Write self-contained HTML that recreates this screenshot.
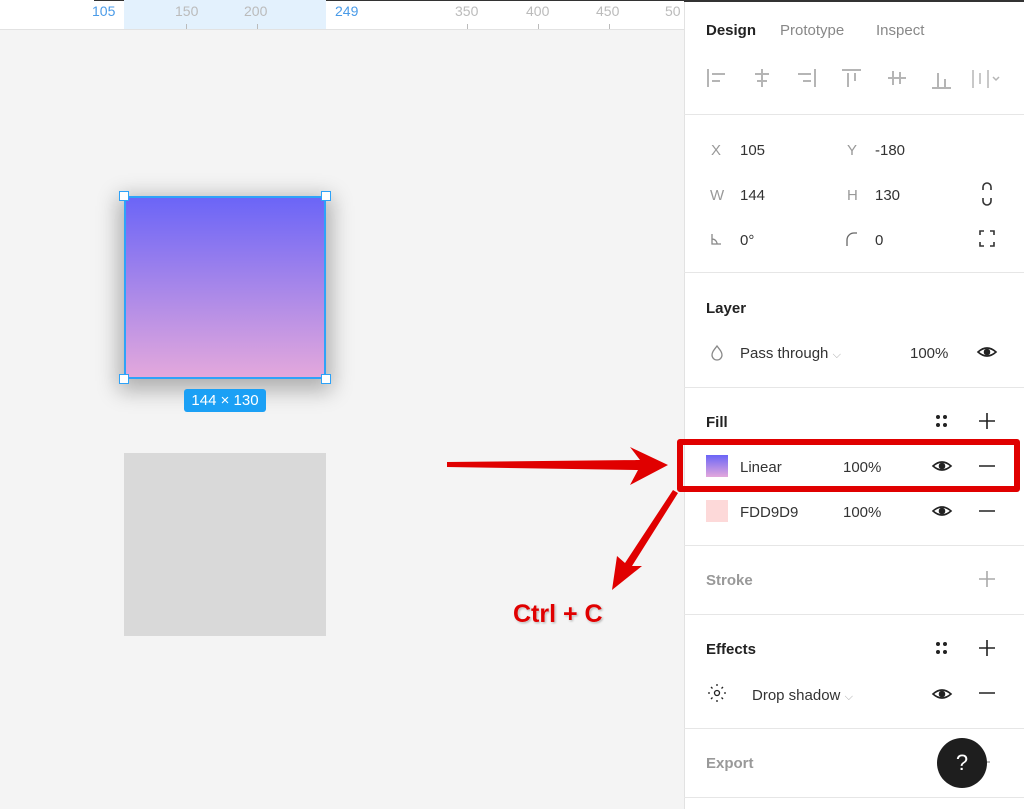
<!DOCTYPE html>
<html><head><meta charset="utf-8"><style>
*{margin:0;padding:0;box-sizing:border-box}
body{width:1024px;height:809px;overflow:hidden;background:#f4f4f4;font-family:"Liberation Sans",sans-serif;position:relative;color:#222}
.a{position:absolute}
.rl{font-size:14px;color:#bbb;top:3px}
.tk{position:absolute;top:24px;width:1px;height:5px;background:#bbb}
.t{position:absolute;font-size:15px;color:#333;margin-top:2px}
.g{color:#999}
.h{position:absolute;font-size:15px;font-weight:bold;color:#222;margin-top:2px}
.sep{position:absolute;left:684px;width:340px;height:1px;background:#e6e6e6}
svg{position:absolute;overflow:visible}
</style></head><body>
<div class="a" style="left:0;top:0;width:684px;height:30px;background:#fff;border-bottom:1px solid #e2e2e2"></div>
<div class="a" style="left:94px;top:0;width:590px;height:1px;background:#333"></div>
<div class="a" style="left:124px;top:0;width:202px;height:29px;background:#e3f1fd"></div>
<div class="a rl" style="left:92px;color:#4a9be8">105</div>
<div class="a rl" style="left:175px">150</div>
<div class="a rl" style="left:244px">200</div>
<div class="a rl" style="left:335px;color:#4a9be8">249</div>
<div class="a rl" style="left:455px">350</div>
<div class="a rl" style="left:526px">400</div>
<div class="a rl" style="left:596px">450</div>
<div class="a rl" style="left:665px">50</div>
<div class="tk" style="left:186px"></div><div class="tk" style="left:257px"></div><div class="tk" style="left:467px"></div><div class="tk" style="left:538px"></div><div class="tk" style="left:609px"></div>
<div class="a" style="left:124px;top:196px;width:202px;height:183px;background:linear-gradient(#6b65f7,#e3a8dc);box-shadow:0 6px 20px 6px rgba(0,0,0,.28);border:2px solid #2ea2f8"></div>
<div class="a" style="left:119px;top:191px;width:10px;height:10px;background:#fff;border:1.5px solid #2ea2f8"></div>
<div class="a" style="left:321px;top:191px;width:10px;height:10px;background:#fff;border:1.5px solid #2ea2f8"></div>
<div class="a" style="left:119px;top:374px;width:10px;height:10px;background:#fff;border:1.5px solid #2ea2f8"></div>
<div class="a" style="left:321px;top:374px;width:10px;height:10px;background:#fff;border:1.5px solid #2ea2f8"></div>
<div class="a" style="left:184px;top:389px;width:82px;height:23px;background:#1ba0f5;border-radius:3px;color:#fff;font-size:15px;text-align:center;line-height:23px">144 × 130</div>
<div class="a" style="left:124px;top:453px;width:202px;height:183px;background:#d9d9d9"></div>
<div class="a" style="left:684px;top:0;width:340px;height:809px;background:#fff;border-left:1px solid #e2e2e2"></div>
<div class="a" style="left:684px;top:0;width:340px;height:2px;background:#333"></div>
<div class="t" style="left:706px;top:20px;font-weight:bold;color:#222">Design</div>
<div class="t g" style="left:780px;top:20px;color:#888">Prototype</div>
<div class="t g" style="left:876px;top:20px;color:#888">Inspect</div>
<svg style="left:0;top:0" width="1024" height="809" stroke="#b5b5b5" stroke-width="2" fill="none">
<path d="M708 69v18M712 74h13M712 81h8"/><path d="M762 69v18M755 74h14M757 81h10"/>
<path d="M815 69v18M798 74h13M803 81h8"/><path d="M842 70h19M848 73v14M855 73v8"/>
<path d="M888 78h18M893 71v14M900 72v12"/><path d="M932 88h19M938 73v14M945 79v8"/>
<path d="M973 70v18M980 73v11M988 70v18M993 77l3 3 3-3" stroke-width="1.5"/>
</svg>
<div class="sep" style="top:114px"></div>
<div class="t g" style="left:711px;top:140px">X</div><div class="t" style="left:740px;top:140px">105</div>
<div class="t g" style="left:847px;top:140px">Y</div><div class="t" style="left:875px;top:140px">-180</div>
<div class="t g" style="left:710px;top:185px">W</div><div class="t" style="left:740px;top:185px">144</div>
<div class="t g" style="left:847px;top:185px">H</div><div class="t" style="left:875px;top:185px">130</div>
<div class="t" style="left:740px;top:230px">0°</div><div class="t" style="left:875px;top:230px">0</div>
<svg style="left:0;top:0" width="1024" height="809" stroke="#333" stroke-width="1.6" fill="none">
<path d="M983 190v-3a4 4 0 0 1 8 0v3M983 198v3a4 4 0 0 0 8 0v-3"/>
<path d="M980 235v-4h4M990 231h4v4M994 242v4h-4M984 246h-4v-4"/>
<path d="M712 234v10h9M712 239a5 5 0 0 1 5 5" stroke="#888" stroke-width="1.3"/>
<path d="M847 246v-6a7 7 0 0 1 7-7h3" stroke="#666" stroke-width="1.3"/>
</svg>
<div class="sep" style="top:272px"></div>
<div class="h" style="left:706px;top:298px">Layer</div>
<div class="t" style="left:740px;top:343px">Pass through <span style="color:#aaa;font-size:11px">⌵</span></div>
<div class="t" style="left:910px;top:343px">100%</div>
<div class="sep" style="top:387px"></div>
<div class="h" style="left:706px;top:412px">Fill</div>
<div class="t" style="left:740px;top:457px">Linear</div><div class="t" style="left:843px;top:457px">100%</div>
<div class="a" style="left:706px;top:455px;width:22px;height:22px;background:linear-gradient(#6b65f7,#e3a8dc)"></div>
<div class="t" style="left:740px;top:502px">FDD9D9</div><div class="t" style="left:843px;top:502px">100%</div>
<div class="a" style="left:706px;top:500px;width:22px;height:22px;background:#fdd9d9"></div>
<div class="sep" style="top:545px"></div>
<div class="h" style="left:706px;top:570px;color:#999">Stroke</div>
<div class="sep" style="top:614px"></div>
<div class="h" style="left:706px;top:639px">Effects</div>
<div class="t" style="left:752px;top:685px">Drop shadow <span style="color:#aaa;font-size:11px">⌵</span></div>
<div class="sep" style="top:728px"></div>
<div class="h" style="left:706px;top:753px;color:#999">Export</div>
<div class="sep" style="top:797px"></div>
<svg style="left:0;top:0" width="1024" height="809" stroke="#222" stroke-width="1.6" fill="none">
<path d="M717 346c-3 4-5 6-5 9a5 5 0 0 0 10 0c0-3-2-5-5-9z" stroke="#888" stroke-width="1.3"/>
<path d="M978 352q9-8 18 0q-9 8-18 0z"/><circle cx="987" cy="352" r="2.5" fill="#222"/>
<path d="M933 466q9-8 18 0q-9 8-18 0z"/><circle cx="942" cy="466" r="2.5" fill="#222"/>
<path d="M933 511q9-8 18 0q-9 8-18 0z"/><circle cx="942" cy="511" r="2.5" fill="#222"/>
<path d="M933 694q9-8 18 0q-9 8-18 0z"/><circle cx="942" cy="694" r="2.5" fill="#222"/>
<path d="M979 466h16M979 511h16M979 693h16"/>
<path d="M987 413v16M979 421h16M987 640v16M979 648h16"/>
<path d="M987 571v16M979 579h16" stroke="#aaa"/>
<g fill="#222" stroke="none"><circle cx="938" cy="417" r="2"/><circle cx="945" cy="417" r="2"/><circle cx="938" cy="425" r="2"/><circle cx="945" cy="425" r="2"/>
<circle cx="938" cy="644" r="2"/><circle cx="945" cy="644" r="2"/><circle cx="938" cy="652" r="2"/><circle cx="945" cy="652" r="2"/></g>
<circle cx="717" cy="693" r="2.5" stroke-width="1.3"/>
<path d="M717 684v2M717 700v2M708 693h2M724 693h2M711 687l1.5 1.5M723 687l-1.5 1.5M711 699l1.5-1.5M723 699l-1.5-1.5" stroke-width="1.3"/>
<path d="M980 762h10" stroke="#aaa"/>
</svg>
<div class="a" style="left:937px;top:738px;width:50px;height:50px;border-radius:50%;background:#1e1e1e;color:#fff;font-size:22px;text-align:center;line-height:50px">?</div>
<div class="a" style="left:677px;top:439px;width:343px;height:53px;border:6px solid #e00000;border-radius:3px"></div>
<svg style="left:0;top:0" width="1024" height="809">
<path d="M447 462L640 460L630 447L668 465L630 485L638 470L447 467Z" fill="#e00000"/>
<path d="M678 493L632 566L642 566L612 590L617 556L625 563L673 490Z" fill="#e00000"/>
</svg>
<div class="a" style="left:513px;top:600px;font-size:25px;font-weight:bold;color:#e00000;text-shadow:0 0 2px #fff,1px 1px 2px #999">Ctrl + C</div>
</body></html>
